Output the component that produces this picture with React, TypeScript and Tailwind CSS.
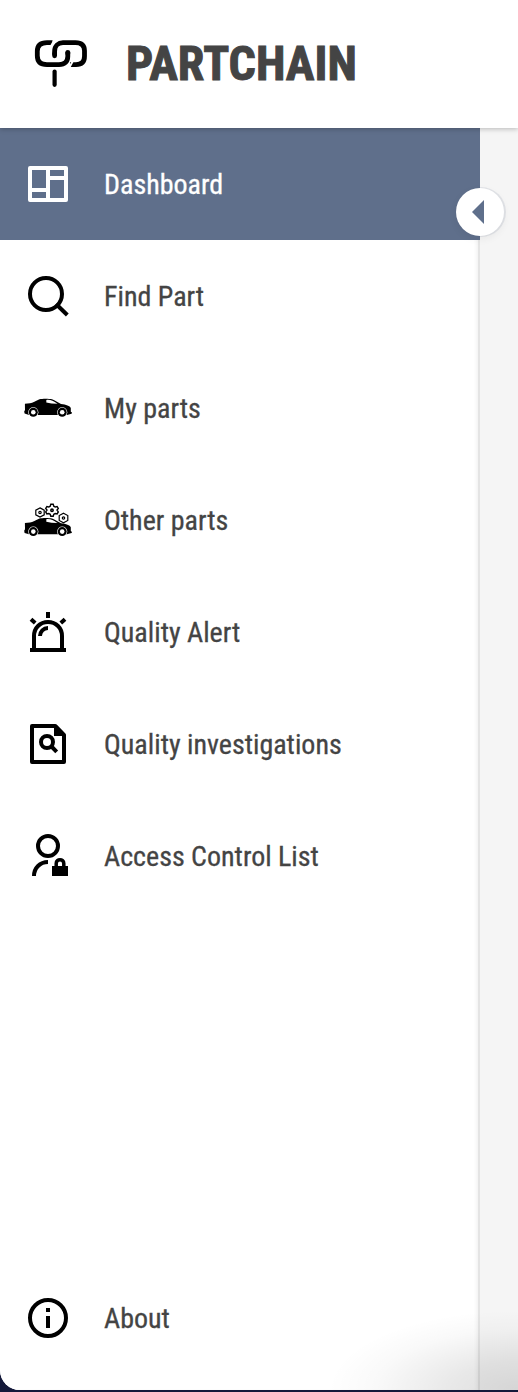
import type { ReactNode } from "react";

const fontStack = "font-['Roboto_Condensed',Roboto,sans-serif] [font-stretch:75%]";

function Logo() {
  return (
    <svg width="56" height="52" viewBox="32 37.2 56 52" fill="none" stroke="#000" strokeWidth="4.8" className="shrink-0">
      <path d="M54.6 54V50.5C54.6 45 58.5 41.8 63 41.8H75.5C82 41.8 84.5 45 84.5 50V55.5C84.5 61 82 63.8 76 63.8H70" />
      <path d="M52.5 41.8H47C40.5 41.8 37.3 45 37.3 50.5V55C37.3 61 40.5 63.8 47 63.8H59C65 63.8 67.8 60.5 67.8 55.5V51" />
      <path d="M54.6 53V55M67.8 53V51.5" strokeLinecap="round" />
      <path d="M54.6 70.8V84" strokeWidth="4.2" strokeLinecap="round" />
      <path d="M50.8 45.8L55 38.2M68.8 67.6L73 60" stroke="#fff" strokeWidth="2" />
    </svg>
  );
}

function DashboardIcon() {
  return (
    <svg width="48" height="48" viewBox="0 0 48 48" fill="none" stroke="#fff" strokeWidth="4">
      <rect x="6" y="8" width="36" height="32" strokeLinejoin="round" />
      <path d="M24 8V40M24 18H42M6 30H24" />
    </svg>
  );
}

function SearchIcon() {
  return (
    <svg width="48" height="48" viewBox="0 0 48 48" fill="none" stroke="#000" strokeWidth="4">
      <circle cx="22" cy="22" r="16" />
      <path d="M32 32L43.3 43" />
    </svg>
  );
}

function CarShape() {
  return (
    <>
      <path
        d="M.9 19.8L6 19.2C8.5 19.2 12 16.5 15.5 15.2C18.5 14.5 25 14.5 28 15.3C31 16.2 34 18.6 37 20C42 20.6 46 21.8 46.8 24V27.8L48 28.6L47.6 29.8L43 31H5L.6 29.6L.2 27.5L1 26Z"
        fill="#000"
      />
      <path d="M22.3 15.9C26.5 15.5 29 16.6 33.5 19.8L27.5 19.5L22.3 18.5Z" fill="#fff" />
      {[9.3, 38.2].map((x) => (
        <g key={x}>
          <circle cx={x} cy="28.3" r="5.1" fill="#fff" />
          <circle cx={x} cy="28.3" r="4.5" fill="#000" />
          <circle cx={x} cy="28.3" r="2.3" fill="#fff" />
        </g>
      ))}
    </>
  );
}

function CarIcon() {
  return (
    <svg width="48" height="48" viewBox="0 0 48 48">
      <CarShape />
    </svg>
  );
}

function CarGearsIcon() {
  return (
    <svg width="48" height="48" viewBox="0 0 48 48">
      <g transform="translate(0 7.3)">
        <CarShape />
      </g>
      <g fill="none" stroke="#000">
        <path d="M16 11.9L20.2 14.2V18.8L16 21.1L11.8 18.8V14.2Z" strokeWidth="1.2" />
        <circle cx="16" cy="16.5" r="1.2" strokeWidth="1.2" />
        <path d="M39.5 17.2L43.8 19.6V24.4L39.5 26.8L35.2 24.4V19.6Z" strokeWidth="1.2" fill="#fff" />
        <circle cx="39.5" cy="22" r="1.2" strokeWidth="1.2" />
        <path
          d="M26.8 8.3H29.2L29.8 10.2L31.2 11L33.1 10.5L34.3 12.5L33 14L34.3 15.9L33.1 17.9L31.2 17.5L29.8 18.3L29.2 20.2H26.8L26.2 18.3L24.8 17.5L22.9 17.9L21.7 15.9L23 14L21.7 12.5L22.9 10.5L24.8 11L26.2 10.2Z"
          strokeWidth="1.4"
          fill="#fff"
        />
        <circle cx="28" cy="14.3" r="1.2" strokeWidth="1.5" />
      </g>
    </svg>
  );
}

function AlertIcon() {
  return (
    <svg width="48" height="48" viewBox="0 0 48 48" fill="none" stroke="#000" strokeWidth="4">
      <path d="M6 42H42M10 42V28C10 20 16 14 24 14S38 20 38 28V42M24 4V10M7 11.2L11.2 15M41 11.2L36.8 15" />
      <path d="M16 28C16 23.5 19.5 20 24 20" />
    </svg>
  );
}

function InvestigationIcon() {
  return (
    <svg width="48" height="48" viewBox="0 0 48 48" fill="none" stroke="#000" strokeWidth="4">
      <path d="M8 6H31.3L40 14.8V42H8Z" strokeLinejoin="round" />
      <path d="M30 5L41 16H30Z" fill="#000" stroke="none" />
      <circle cx="23" cy="22" r="6" />
      <path d="M27 26L32.7 31.8" />
    </svg>
  );
}

function AccessIcon() {
  return (
    <svg width="48" height="48" viewBox="0 0 48 48" fill="none" stroke="#000" strokeWidth="4">
      <circle cx="24" cy="14" r="10" />
      <path d="M10 44C10 36 16 30 24 30" />
      <path d="M28 34H44V44H28Z" fill="#000" stroke="none" />
      <path d="M32.2 35V31.5C32.2 26.5 39.8 26.5 39.8 31.5V35" strokeWidth="3.5" />
    </svg>
  );
}

function InfoIcon() {
  return (
    <svg width="48" height="48" viewBox="0 0 48 48" fill="none" stroke="#000" strokeWidth="4">
      <circle cx="24" cy="24" r="18" />
      <path d="M24 14V18M24 22V34" />
    </svg>
  );
}

function NavItem({ icon, label, active = false }: { icon: ReactNode; label: string; active?: boolean }) {
  return (
    <a
      className={
        active
          ? "flex h-28 shrink-0 items-center gap-8 bg-[#5f6f8b] pl-6 text-white"
          : "flex h-28 shrink-0 items-center gap-8 pl-6 text-[#444]"
      }
    >
      {icon}
      <span className="pt-0.5 text-[28px] leading-8 font-normal whitespace-nowrap [-webkit-text-stroke:0.3px_currentColor]">
        {label}
      </span>
    </a>
  );
}

export default function App() {
  return (
    <div className={`h-[1392px] w-[518px] overflow-hidden bg-[#14193a] pb-0.5 ${fontStack}`}>
      <div className="relative flex h-full flex-col overflow-hidden rounded-bl-[20px] bg-white">
        <header className="relative z-10 flex h-32 shrink-0 items-center bg-white pl-8 shadow-[0_1px_5px_rgba(0,0,0,0.25)]">
          <Logo />
          <h1 className="ml-[38px] text-5xl font-bold text-[#444] [-webkit-text-stroke:1px_currentColor]">PARTCHAIN</h1>
        </header>
        <div className="flex min-h-0 flex-1">
          <aside className="relative flex w-[480px] shrink-0 flex-col bg-white shadow-[inset_-2px_0_0_#e4e4e4,inset_-5px_0_4px_-2px_#eee]">
            <nav className="flex flex-col">
              <NavItem icon={<DashboardIcon />} label="Dashboard" active />
              <NavItem icon={<SearchIcon />} label="Find Part" />
              <NavItem icon={<CarIcon />} label="My parts" />
              <NavItem icon={<CarGearsIcon />} label="Other parts" />
              <NavItem icon={<AlertIcon />} label="Quality Alert" />
              <NavItem icon={<InvestigationIcon />} label="Quality investigations" />
              <NavItem icon={<AccessIcon />} label="Access Control List" />
            </nav>
            <div className="mt-auto pb-4">
              <NavItem icon={<InfoIcon />} label="About" />
            </div>
            <button
              aria-label="Collapse"
              className="absolute top-[60px] -right-6 z-10 flex size-12 items-center justify-center rounded-full bg-white shadow-[1px_0_0_1px_rgba(95,111,139,0.13),0_3px_8px_rgba(0,0,0,0.06)]"
            >
              <svg width="16" height="24" viewBox="0 0 16 24" className="mr-1">
                <path d="M2 12L14 0V24Z" fill="#5f6f8b" />
              </svg>
            </button>
          </aside>
          <main className="flex-1 bg-[#f5f5f5]" />
        </div>
        <div className="pointer-events-none absolute right-0 bottom-0 h-20 w-[190px] bg-[radial-gradient(ellipse_100%_100%_at_100%_100%,rgba(0,0,0,0.13),rgba(0,0,0,0.09)_35%,rgba(0,0,0,0.025)_75%,transparent)]" />
      </div>
    </div>
  );
}
